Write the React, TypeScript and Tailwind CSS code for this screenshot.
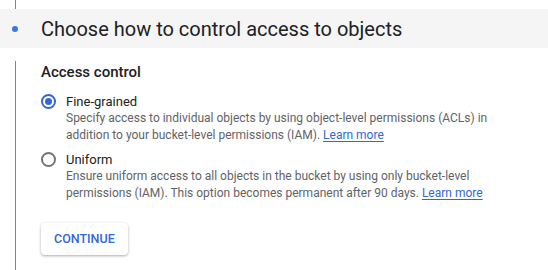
export default function App() {
  return (
    <div
      className="w-[548px] h-[270px] bg-white overflow-hidden flex flex-col"
      style={{ fontFamily: "Roboto, 'Liberation Sans', sans-serif" }}
    >
      <div className="h-[9px] ml-[15px] border-l border-[#80868b]" />
      <div className="h-[39px] bg-[#f5f5f5] flex items-center">
        <div className="w-[6px] h-[6px] rounded-full bg-[#3b78e7] ml-[12px]" />
        <h2 className="ml-[23px] text-[20px] text-[#202124] leading-none">
          Choose how to control access to objects
        </h2>
      </div>
      <div className="mt-[13px] ml-[15px] flex-1 border-l border-[#80868b] pl-[25px] pt-[2px]">
        <h3 className="text-[15px] font-medium text-[#202124] leading-[18px]">Access control</h3>

        <div className="mt-[12px] flex flex-col gap-[7px]">
          <Option
            checked
            label="Fine-grained"
            text="Specify access to individual objects by using object-level permissions (ACLs) in addition to your bucket-level permissions (IAM)."
          />
          <Option
            label="Uniform"
            text="Ensure uniform access to all objects in the bucket by using only bucket-level permissions (IAM). This option becomes permanent after 90 days."
          />
        </div>

        <button className="mt-[21px] h-[32px] px-[13px] bg-white rounded-[4px] text-[12.5px] font-medium text-[#3367d6] shadow-[0_1px_3px_rgba(60,64,67,0.3),0_1px_2px_rgba(60,64,67,0.15)]">
          CONTINUE
        </button>
      </div>
    </div>
  );
}

function Option({ checked, label, text }: { checked?: boolean; label: string; text: string }) {
  return (
    <div className="flex gap-[10px]">
      <div
        className={
          "mt-[1px] w-[15px] h-[15px] shrink-0 rounded-full border-2 flex items-center justify-center " +
          (checked ? "border-[#3367d6]" : "border-[#757575]")
        }
      >
        {checked && <div className="w-[7px] h-[7px] rounded-full bg-[#3367d6]" />}
      </div>
      <div className="w-[440px]">
        <div className="text-[13px] text-[#202124] leading-[17px]">{label}</div>
        <p className="text-[12px] text-[#5f6368] leading-[17px]">
          {text}{" "}
          <a className="text-[#3367d6] underline underline-offset-2" href="#">
            Learn more
          </a>
        </p>
      </div>
    </div>
  );
}
